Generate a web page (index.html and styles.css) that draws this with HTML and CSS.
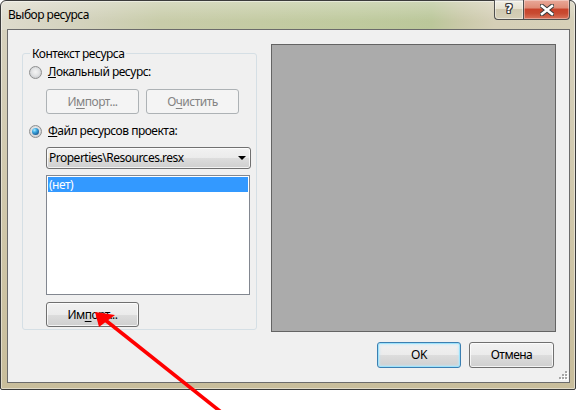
FILE: index.html
```html
<!DOCTYPE html>
<html lang="ru">
<head>
<meta charset="utf-8">
<title>Выбор ресурса</title>
<link rel="stylesheet" href="styles.css">
</head>
<body>
<div class="window">
  <div class="titlebar">
    <span class="title">Выбор ресурса</span>
    <div class="caps">
      <div class="cap help"><span class="qmark">?</span></div>
      <div class="cap close">
        <svg width="14" height="12" viewBox="0 0 14 12">
          <path d="M2 2 L12 10 M12 2 L2 10" stroke="#3a3a3a" stroke-width="4.6" stroke-linecap="square"/>
          <path d="M2 2 L12 10 M12 2 L2 10" stroke="#ffffff" stroke-width="2.6" stroke-linecap="square"/>
        </svg>
      </div>
    </div>
  </div>
  <div class="client">
    <div class="main">
      <fieldset class="group">
        <legend>Контекст ресурса</legend>
        <div class="gbody">
          <div class="radio-row"><span class="radio"></span><span><u>Л</u>окальный ресурс:</span></div>
          <div class="btn-row">
            <div class="btn disabled">И<u>м</u>порт...</div>
            <div class="btn disabled">О<u>ч</u>истить</div>
          </div>
          <div class="radio-row second"><span class="radio checked"></span><span><u>Ф</u>айл ресурсов проекта:</span></div>
          <div class="combo"><span>Properties\Resources.resx</span><span class="drop"></span></div>
          <div class="listbox"><div class="item sel">(нет)</div></div>
          <div class="btn import">Им<u>п</u>орт...</div>
        </div>
      </fieldset>
      <div class="preview"></div>
    </div>
    <div class="footer">
      <div class="btn default ok">OK</div>
      <div class="btn cancel">Отмена</div>
    </div>
    <svg class="grip" width="10" height="10" viewBox="0 0 10 10">
      <g fill="#ffffff">
        <rect x="8" y="1" width="2" height="2"/>
        <rect x="8" y="4" width="2" height="2"/><rect x="5" y="4" width="2" height="2"/>
        <rect x="8" y="7" width="2" height="2"/><rect x="5" y="7" width="2" height="2"/><rect x="2" y="7" width="2" height="2"/>
      </g>
      <g fill="#a6a6a6">
        <rect x="7" y="0" width="2" height="2"/>
        <rect x="7" y="3" width="2" height="2"/><rect x="4" y="3" width="2" height="2"/>
        <rect x="7" y="6" width="2" height="2"/><rect x="4" y="6" width="2" height="2"/><rect x="1" y="6" width="2" height="2"/>
      </g>
    </svg>
  </div>
</div>
<svg class="arrow" width="577" height="410" viewBox="0 0 577 410">
  <line x1="104" y1="319" x2="221" y2="412" stroke="#ff0000" stroke-width="3.6"/>
  <polygon points="95,312 115,315 99,327" fill="#ff0000"/>
</svg>
</body>
</html>
```

FILE: styles.css
```css
* { box-sizing: border-box; }
html, body { margin: 0; padding: 0; background: #ffffff; }
body {
  width: 577px;
  height: 410px;
  position: relative;
  overflow: hidden;
  font-family: "Noto Sans", "Segoe UI", sans-serif;
  font-size: 12px;
  line-height: 16px;
  letter-spacing: -0.5px;
  color: #000;
}

.window {
  width: 576px;
  height: 390px;
  border: 1px solid #3b3b3b;
  border-radius: 6px 6px 2px 2px;
  padding: 0 5px 6px 6px;
  display: flex;
  flex-direction: column;
  background:
    linear-gradient(to bottom, rgba(255,255,255,0.28), rgba(255,255,255,0) 70%) top / 100% 29px no-repeat,
    linear-gradient(to right, #dedbcc 0%, #d3d2bd 14%, #c8cca9 28%, #c4cba3 45%, #bfca9e 62%, #bbc79a 75%, #c9c9a8 80%, #d5cfb7 86%, #d6d0b8 100%) top / 100% 29px no-repeat,
    linear-gradient(to bottom, #d7d2bf 0%, #cfc6a8 60%, #c8bd9b 100%);
  box-shadow: inset 0 0 0 1px rgba(255,255,255,0.45);
}

.titlebar {
  height: 28px;
  flex: none;
  display: flex;
  justify-content: space-between;
  align-items: flex-start;
  padding-left: 1px;
}
.title { margin-top: 6px; font-size: 12px; }

.caps { display: flex; margin-top: -1px; }
.cap {
  height: 20px;
  border: 1px solid #4f4f4f;
  border-top: none;
  display: flex;
  align-items: center;
  justify-content: center;
}
.help {
  width: 29px;
  border-right: none;
  border-radius: 0 0 0 4px;
  background: linear-gradient(to bottom, rgba(255,255,255,0.55) 0%, rgba(240,236,222,0.5) 45%, rgba(200,192,165,0.6) 50%, rgba(214,207,184,0.7) 100%);
  box-shadow: inset 0 0 0 1px rgba(255,255,255,0.45);
}
.qmark {
  font-family: "DejaVu Sans", sans-serif;
  font-weight: bold;
  font-size: 12px;
  line-height: 13px;
  letter-spacing: 0;
  color: #fff;
  text-shadow: 1px 0 0 #3a3a3a, -1px 0 0 #3a3a3a, 0 1px 0 #3a3a3a, 0 -1px 0 #3a3a3a, 1px 1px 0 #3a3a3a, -1px -1px 0 #3a3a3a, 1px -1px 0 #3a3a3a, -1px 1px 0 #3a3a3a;
}
.close {
  width: 47px;
  border-radius: 0 0 4px 0;
  background: linear-gradient(to bottom, #e9a999 0%, #df8d78 40%, #c8432b 50%, #c84a31 70%, #d9735a 100%);
  box-shadow: inset 0 0 0 1px rgba(255,255,255,0.35);
}

.client {
  position: relative;
  flex: none;
  height: 354px;
  border: 1px solid #6b6b6b;
  background: #f0f0f0;
}

.main {
  display: flex;
  gap: 14px;
  padding: 14px 13px 0 14px;
  align-items: flex-start;
}

.group {
  width: 235px;
  margin: 2px 0 0;
  padding: 0;
  border: 1px solid #d5dfe5;
  border-radius: 3px;
  min-width: 0;
}
.group legend {
  margin-left: 7px;
  padding: 0 2px;
  line-height: 15px;
}
.gbody {
  display: flex;
  flex-direction: column;
  align-items: flex-start;
  padding: 3px 5px 2px 6px;
}

.radio-row {
  display: flex;
  align-items: center;
  gap: 6px;
  height: 16px;
}
.radio-row.second { margin-top: 9px; }
.radio {
  width: 13px;
  height: 13px;
  border-radius: 50%;
  border: 1px solid #8e8f8f;
  background: radial-gradient(circle at 50% 45%, #f4f4f4 0%, #e2e3e4 45%, #cfd1d4 70%, #f6f6f6 100%);
  position: relative;
}
.radio.checked::after {
  content: "";
  position: absolute;
  left: 2px;
  top: 2px;
  width: 7px;
  height: 7px;
  border-radius: 50%;
  background: radial-gradient(circle at 35% 30%, #a9ecff 0%, #3aa6e0 35%, #1d5f96 75%, #163e6a 100%);
}

.btn-row {
  display: flex;
  gap: 7px;
  margin: 9px 0 0 17px;
}

.btn {
  height: 25px;
  border: 1px solid #707070;
  border-radius: 3px;
  background: linear-gradient(to bottom, #f2f2f2 0%, #ebebeb 50%, #dddddd 51%, #cfcfcf 100%);
  box-shadow: inset 0 0 0 1px rgba(255,255,255,0.75);
  display: flex;
  align-items: center;
  justify-content: center;
  color: #000;
}
.btn-row .btn { width: 93px; }
.btn.disabled {
  border-color: #adb2b5;
  background: #f4f4f4;
  box-shadow: none;
  color: #838383;
}
.btn.import { width: 93px; margin: 7px 0 0 17px; }
.btn u { text-underline-offset: 2px; }

.combo {
  width: 205px;
  height: 22px;
  margin: 8px 0 0 17px;
  border: 1px solid #707070;
  border-radius: 3px;
  background: linear-gradient(to bottom, #f2f2f2 0%, #ebebeb 50%, #dddddd 51%, #cfcfcf 100%);
  box-shadow: inset 0 0 0 1px rgba(255,255,255,0.75);
  display: flex;
  align-items: center;
  justify-content: space-between;
  padding: 0 4px 0 2px;
}
.drop {
  width: 0;
  height: 0;
  border-left: 4px solid transparent;
  border-right: 4px solid transparent;
  border-top: 4px solid #000;
}

.listbox {
  width: 204px;
  height: 120px;
  margin: 6px 0 0 17px;
  border: 1px solid #828790;
  background: #fff;
  padding: 1px;
}
.item { height: 15px; line-height: 15px; padding-left: 1px; }
.item.sel { background: #3399ff; color: #fff; }

.preview {
  width: 285px;
  height: 288px;
  background: #ababab;
  border: 1px solid #646464;
}

.footer {
  display: flex;
  justify-content: flex-end;
  gap: 8px;
  margin-top: 10px;
  padding-right: 15px;
}
.ok { width: 84px; height: 26px; }
.cancel { width: 85px; height: 26px; }
.btn.default {
  border-color: #3c7fb1;
  box-shadow: inset 0 0 0 1px #9ee2fb, inset 0 0 2px 2px rgba(190,232,250,0.6);
}

.grip { position: absolute; right: 1px; bottom: 1px; }

.arrow { position: absolute; left: 0; top: 0; pointer-events: none; }
```
